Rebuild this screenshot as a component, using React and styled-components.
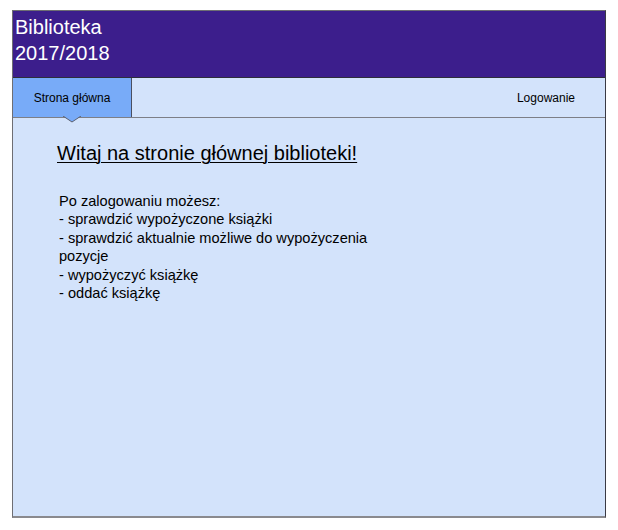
import React from 'react';
import styled, { createGlobalStyle } from 'styled-components';

const GlobalStyle = createGlobalStyle`
  body {
    margin: 0;
    padding: 10px 12px;
    background: #ffffff;
    font-family: "Liberation Sans", Arial, sans-serif;
  }
`;

const Frame = styled.div`
  width: 594px;
  height: 508px;
  box-sizing: border-box;
  background-color: #d3e3fb;
  border: 1px solid #6e6e73;
  border-right-color: #3a3a44;
  border-bottom: 2px solid #8a8a8e;
  display: flex;
  flex-direction: column;
`;

const Header = styled.header`
  height: 66px;
  background-color: #3c1e8c;
  color: #ffffff;
  font-size: 20px;
  line-height: 26px;
  padding: 3px 0 0 2px;
  box-sizing: border-box;
`;

const Nav = styled.nav`
  height: 41px;
  box-sizing: border-box;
  display: flex;
  align-items: stretch;
  justify-content: space-between;
  border-top: 1px solid #2e2e3a;
  border-bottom: 1px solid #7d7f86;
  font-size: 12px;
  color: #000;
`;

const Tab = styled.div`
  position: relative;
  width: 119px;
  display: flex;
  align-items: center;
  background-color: ${(p) => (p.$active ? '#78abf8' : 'transparent')};
  border-right: ${(p) => (p.$active ? '1px solid #4a4f60' : 'none')};
  padding-right: ${(p) => (p.$active ? '0' : '30px')};
  justify-content: ${(p) => (p.$active ? 'center' : 'flex-end')};
  box-sizing: border-box;
`;

const Caret = styled.svg`
  position: absolute;
  left: 50px;
  bottom: -6px;
`;

const Content = styled.main`
  padding: 22px 0 0 44px;
  color: #000;
`;

const Title = styled.h1`
  margin: 0;
  font-size: 20px;
  font-weight: normal;
  text-decoration: underline;
  text-decoration-thickness: 1px;
  text-underline-offset: 2px;
  line-height: 26px;
`;

const Info = styled.div`
  margin-top: 26px;
  margin-left: 2px;
  width: 330px;
  font-size: 14.6px;
  line-height: 18.4px;
`;

const Line = styled.div`
  margin: 0;
`;

const items = [
  'Po zalogowaniu możesz:',
  '- sprawdzić wypożyczone książki',
  '- sprawdzić aktualnie możliwe do wypożyczenia pozycje',
  '- wypożyczyć książkę',
  '- oddać książkę',
];

const App = () => (
  <>
    <GlobalStyle />
    <Frame>
      <Header>
        Biblioteka
        <br />
        2017/2018
      </Header>
      <Nav>
        <Tab $active>
          Strona główna
          <Caret width="18" height="7" viewBox="0 0 18 7">
            <polygon points="0,0 18,0 9,6" fill="#78abf8" />
            <polyline points="0,0 9,6 18,0" fill="none" stroke="#5a6070" strokeWidth="1" />
          </Caret>
        </Tab>
        <Tab>Logowanie</Tab>
      </Nav>
      <Content>
        <Title>Witaj na stronie głównej biblioteki!</Title>
        <Info>
          {items.map((item, index) => (
            <Line key={index}>{item}</Line>
          ))}
        </Info>
      </Content>
    </Frame>
  </>
);

export default App;
